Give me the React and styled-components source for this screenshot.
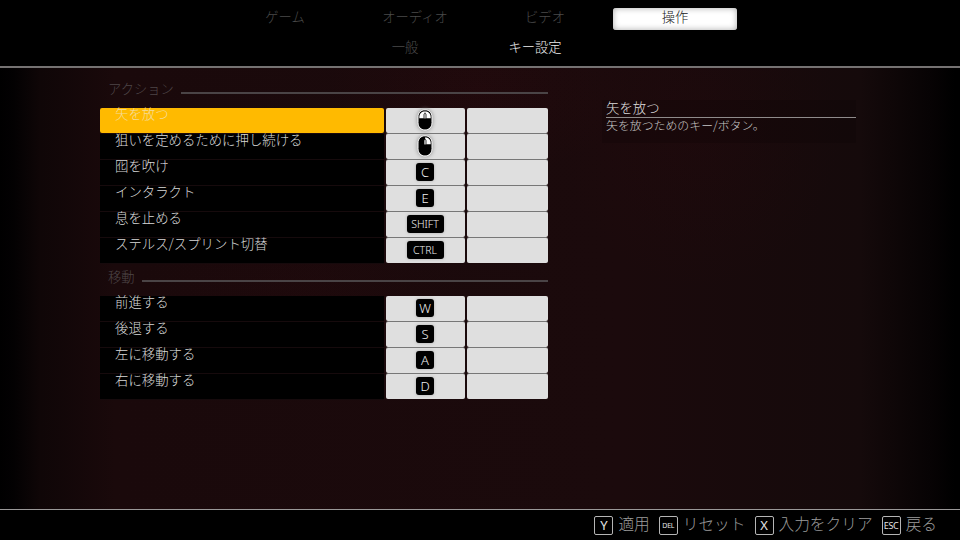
import React from "react";
import styled, { createGlobalStyle } from "styled-components";

const GlobalStyle = createGlobalStyle`
  html, body {
    margin: 0;
    padding: 0;
    background: #000;
    overflow: hidden;
  }
  * { box-sizing: border-box; }
`;

const Screen = styled.div`
  width: 960px;
  height: 540px;
  display: flex;
  flex-direction: column;
  font-family: "Noto Sans CJK JP", "Noto Sans", sans-serif;
  font-weight: 300;
  background: #000;
  color: #ddd;
`;

const Header = styled.header`
  height: 68px;
  flex: none;
  background: #000;
  border-bottom: 2px solid #757272;
  padding-top: 6px;
`;

const TabRow = styled.div`
  display: flex;
  justify-content: center;
  margin-right: ${(p) => p.$shift || 0}px;
  height: ${(p) => p.$height}px;
`;

const Tab = styled.div`
  width: 130px;
  height: 22px;
  margin-top: 2px;
  padding-bottom: 5px;
  display: flex;
  align-items: center;
  justify-content: center;
  font-size: 13.3px;
  color: ${(p) => (p.$dim ? "#4a4a4a" : "#eee")};
`;

const ActiveTab = styled.div`
  width: 124px;
  height: 22px;
  margin: 2px 3px 0;
  padding-bottom: 5px;
  display: flex;
  align-items: center;
  justify-content: center;
  font-size: 13.3px;
  color: #222;
  border-radius: 3px;
  background: #fff;
  box-shadow: inset 0 0 6px #aaa;
`;

const Body = styled.main`
  flex: 1;
  display: flex;
  padding: 12px 0 0 100px;
  background:
    radial-gradient(ellipse 150px 90px at 480px 20px, rgba(60, 8, 16, 0.18), transparent),
    radial-gradient(ellipse 140px 160px at 700px 60px, rgba(45, 8, 14, 0.2), transparent),
    radial-gradient(ellipse 160px 100px at 300px 230px, rgba(50, 8, 14, 0.15), transparent),
    linear-gradient(90deg, #000 0, #030102 14px, #0f0607 40px, #1a090b 115px, #1b0a0c 620px, #150a0b 860px, #070304 930px, #000 955px);
`;

const List = styled.div`
  width: 448px;
  flex: none;
`;

const SectionHead = styled.div`
  display: flex;
  align-items: center;
  gap: 7px;
  height: 20px;
  padding-left: 8px;
  font-size: 13.3px;
  color: #4e4648;
  margin-bottom: 8px;
  &::after {
    content: "";
    flex: 1;
    height: 2px;
    margin-top: 5px;
    background: #4a4446;
  }
`;

const HeadText = styled.span`
  margin-bottom: 4px;
`;

const Rows = styled.div`
  margin-bottom: 4px;
`;

const Row = styled.div`
  display: flex;
  height: 26px;
  gap: 2px;
`;

const Label = styled.div`
  width: 284px;
  height: ${(p) => (p.$active ? 25 : 26)}px;
  padding-left: 15px;
  font-size: 13.4px;
  line-height: 10px;
  color: ${(p) => (p.$active ? "#f5dc9a" : "#d8d8d8")};
  background: ${(p) => (p.$active ? "#ffba00" : "#000")};
  border-radius: ${(p) => (p.$active ? "2px" : "0")};
  border-bottom: ${(p) => (p.$active ? "none" : "1px solid #160a0c")};
`;

const KeyCell = styled.div`
  width: ${(p) => p.$width}px;
  height: 25px;
  background: #dfdfdf;
  border-radius: 2px;
  display: flex;
  align-items: center;
  justify-content: center;
  ${Row} + ${Row} & {
    box-shadow: 0 -1px 0 #777;
  }
`;

const KeyCap = styled.span`
  display: inline-flex;
  align-items: center;
  justify-content: center;
  height: 18px;
  min-width: ${(p) => (p.$wide ? 37 : 18)}px;
  margin: 0 1px 1px 0;
  border-radius: 3px;
  background: #000;
  color: #f0f0f0;
  font-family: "Noto Sans", sans-serif;
  font-size: ${(p) => (p.$wide ? 10.5 : 13)}px;
  font-weight: 300;
  box-shadow: 0 0 3px #aaa;
`;

const Info = styled.aside`
  width: 254px;
  height: 43px;
  margin: 20px 0 0 54px;
  padding: 0 0 0 4px;
  background: rgba(10, 4, 5, 0.25);
`;

const InfoTitle = styled.div`
  height: 18px;
  font-size: 13.4px;
  line-height: 15px;
  color: #ddd;
  border-bottom: 1px solid #8f8b8b;
`;

const InfoText = styled.div`
  font-size: 11.9px;
  line-height: 14px;
  color: #c8c8c8;
`;

const Footer = styled.footer`
  height: 31px;
  flex: none;
  background: #000;
  border-top: 1px solid #9a9898;
  display: flex;
  justify-content: flex-end;
  align-items: center;
  padding: 0 23px 0 0;
`;

const Hint = styled.div`
  display: flex;
  align-items: center;
  gap: 5px;
  margin-left: 9px;
  font-size: 15.7px;
  color: #9c9c9c;
  white-space: nowrap;
`;

const HintLabel = styled.span`
  margin-bottom: 3px;
`;

const HintKey = styled.span`
  width: 19px;
  height: 19px;
  display: flex;
  align-items: center;
  justify-content: center;
  border: 1px solid #b5b5b5;
  border-radius: 2px;
  color: #e4e4e4;
  font-family: "Noto Sans", sans-serif;
  font-weight: 400;
  font-size: ${(p) => p.$size}px;
  letter-spacing: -0.3px;
`;

const MouseSvg = styled.svg`
  margin: 0 1px 2px 0;
  filter: drop-shadow(0 0 2px #888);
`;

function MouseIcon({ side }) {
  return (
    <MouseSvg width="24" height="24" viewBox="0 0 24 24">
      <path d="M12 1.8c-4.2 0-7 3-7 7.2v5.6c0 4.4 2.9 7.4 7 7.4s7-3 7-7.4V9c0-4.2-2.8-7.2-7-7.2z" fill="#000" stroke="#fff" strokeWidth="1" />
      <path d="M11.8 3.2C8.6 3.3 6.4 5.6 6.3 9v1.2h5.5z" fill={side === "left" ? "#fff" : "#000"} />
      <path d="M12.2 3.2c3.2.1 5.4 2.4 5.5 5.8v1.2h-5.5z" fill="#fff" />
      <rect x="11" y="5.5" width="2" height="5.5" rx="1" fill="#fff" stroke="#000" strokeWidth="0.8" />
    </MouseSvg>
  );
}

const actionRows = [
  { label: "矢を放つ", mouse: "left", active: true },
  { label: "狙いを定めるために押し続ける", mouse: "right" },
  { label: "囮を吹け", key: "C" },
  { label: "インタラクト", key: "E" },
  { label: "息を止める", key: "SHIFT", wide: true },
  { label: "ステルス/スプリント切替", key: "CTRL", wide: true },
];

const moveRows = [
  { label: "前進する", key: "W" },
  { label: "後退する", key: "S" },
  { label: "左に移動する", key: "A" },
  { label: "右に移動する", key: "D" },
];

function BindRow({ row }) {
  return (
    <Row>
      <Label $active={row.active}>{row.label}</Label>
      <KeyCell $width={79}>
        {row.mouse ? <MouseIcon side={row.mouse} /> : <KeyCap $wide={row.wide}>{row.key}</KeyCap>}
      </KeyCell>
      <KeyCell $width={81} />
    </Row>
  );
}

export default function App() {
  return (
    <Screen>
      <GlobalStyle />
      <Header>
        <TabRow $height={30}>
          <Tab $dim>ゲーム</Tab>
          <Tab $dim>オーディオ</Tab>
          <Tab $dim>ビデオ</Tab>
          <ActiveTab>操作</ActiveTab>
        </TabRow>
        <TabRow $height={22} $shift={20}>
          <Tab $dim>一般</Tab>
          <Tab>キー設定</Tab>
        </TabRow>
      </Header>
      <Body>
        <List>
          <SectionHead><HeadText>アクション</HeadText></SectionHead>
          <Rows>
            {actionRows.map((r) => (
              <BindRow key={r.label} row={r} />
            ))}
          </Rows>
          <SectionHead><HeadText>移動</HeadText></SectionHead>
          <Rows>
            {moveRows.map((r) => (
              <BindRow key={r.label} row={r} />
            ))}
          </Rows>
        </List>
        <Info>
          <InfoTitle>矢を放つ</InfoTitle>
          <InfoText>矢を放つためのキー/ボタン。</InfoText>
        </Info>
      </Body>
      <Footer>
        <Hint><HintKey $size={13}>Y</HintKey><HintLabel>適用</HintLabel></Hint>
        <Hint><HintKey $size={7}>DEL</HintKey><HintLabel>リセット</HintLabel></Hint>
        <Hint><HintKey $size={13}>X</HintKey><HintLabel>入力をクリア</HintLabel></Hint>
        <Hint><HintKey $size={9}>ESC</HintKey><HintLabel>戻る</HintLabel></Hint>
      </Footer>
    </Screen>
  );
}
